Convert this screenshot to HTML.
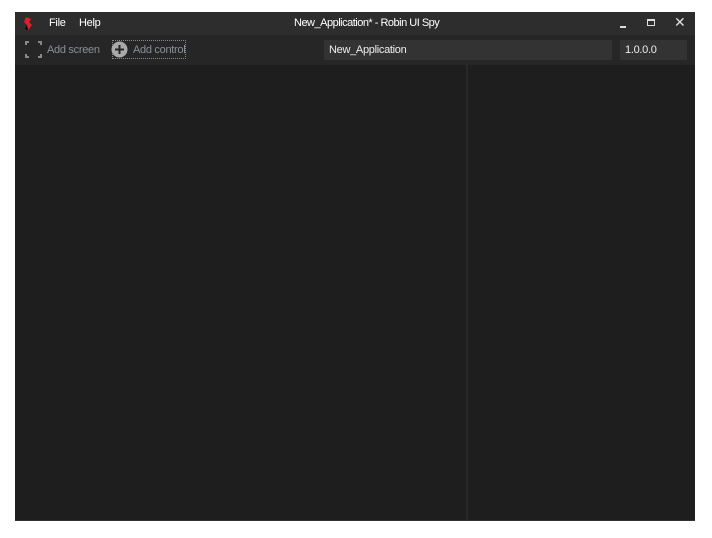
<!DOCTYPE html>
<html><head><meta charset="utf-8"><style>
html,body{margin:0;padding:0;background:#fff;width:712px;height:538px;overflow:hidden;font-family:"Liberation Sans",sans-serif;}
.win{position:absolute;left:15px;top:12px;width:680px;height:508px;background:#1e1e1e;border-bottom:1px solid #333;}
.title{position:absolute;left:0;top:0;width:680px;height:23px;background:#2d2d2d;color:#fff;font-size:11px;}
.tool{position:absolute;left:0;top:23px;width:680px;height:30px;background:#262626;}
.t{position:absolute;line-height:14px;white-space:nowrap;letter-spacing:-0.3px;}
.box{position:absolute;background:#333;height:20px;color:#eee;font-size:11px;line-height:20px;letter-spacing:-0.3px;}
.div{position:absolute;left:451px;top:53px;width:2px;height:455px;background:#282828;}
</style></head><body>
<div class="win">
<div class="title">
 <svg style="position:absolute;left:8px;top:4px" width="10" height="15" viewBox="0 0 10 15"><path d="M3 1 L8 3 L6 6 L9 9 L5 14 L2 13 L4 9 L1 6 Z" fill="#e0202a"/><path d="M2 13 L4 9 L5 14Z" fill="#000"/></svg>
 <span class="t" style="left:34px;top:4px">File</span>
 <span class="t" style="left:64px;top:4px">Help</span>
 <span class="t" style="left:279px;top:4px;letter-spacing:-0.5px">New_Application* - Robin UI Spy</span>
 <div style="position:absolute;left:605px;top:14px;width:6px;height:2px;background:#ddd"></div>
 <div style="position:absolute;left:632px;top:7px;width:6px;height:4px;border:1px solid #ddd;border-top-width:2px"></div>
 <span class="t" style="left:659px;top:3px;font-size:14px;color:#ddd">✕</span>
</div>
<div class="tool">
 <svg style="position:absolute;left:10px;top:6px" width="17" height="17" viewBox="0 0 17 17" fill="none" stroke="#888" stroke-width="2"><path d="M1 4V1H4M13 1H16V4M16 13V16H13M4 16H1V13"/></svg>
 <span class="t" style="left:32px;top:8px;color:#8a8f99;font-size:11px">Add screen</span>
 <div style="position:absolute;left:97px;top:5px;width:72px;height:17px;border:1px dotted #888"></div>
 <svg style="position:absolute;left:96px;top:6px" width="17" height="17" viewBox="0 0 17 17"><circle cx="8.5" cy="8.5" r="8" fill="#aaa"/><path d="M8.5 4V13M4 8.5H13" stroke="#262626" stroke-width="2"/></svg>
 <span class="t" style="left:118px;top:8px;color:#8a8f99;font-size:11px">Add control</span>
 <div class="box" style="left:309px;top:5px;width:288px;padding-left:5px;box-sizing:border-box;">New_Application</div>
 <div class="box" style="left:605px;top:5px;width:67px;padding-left:5px;box-sizing:border-box;">1.0.0.0</div>
</div>
<div class="div"></div>
</div>
</body></html>
